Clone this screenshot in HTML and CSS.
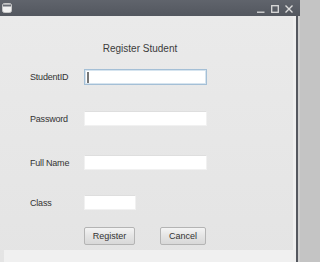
FILE: index.html
```html
<!DOCTYPE html>
<html>
<head>
<meta charset="utf-8">
<link rel="stylesheet" href="styles.css">
</head>
<body>
<div class="window">
  <div class="titlebar">
    <svg class="appicon" width="10" height="10" viewBox="0 0 10 10">
      <rect x="0.5" y="0.5" width="9" height="9" rx="2" fill="#f2f2f2" stroke="#c8c8c8"/>
      <rect x="1" y="1.5" width="8" height="2" fill="#6a6e76"/>
    </svg>
    <div class="spacer"></div>
    <div class="controls">
      <svg width="8" height="8" viewBox="0 0 8 8"><path d="M0 7.2H7.5" stroke="#dcdcdc" stroke-width="1.3"/></svg>
      <svg width="8" height="8" viewBox="0 0 8 8"><rect x="0.7" y="0.7" width="6.6" height="6.6" fill="none" stroke="#dcdcdc" stroke-width="1.3"/></svg>
      <svg width="8" height="8" viewBox="0 0 8 8"><path d="M0.5 0.5L7.5 7.5M7.5 0.5L0.5 7.5" stroke="#dcdcdc" stroke-width="1.4"/></svg>
    </div>
  </div>
  <div class="frame">
    <div class="client">
      <div class="form">
        <div class="heading">Register Student</div>
        <div class="row row-first">
          <span class="label">StudentID</span>
          <div class="field field-focus"><span class="caret"></span></div>
        </div>
        <div class="row row-2">
          <span class="label">Password</span>
          <div class="field"></div>
        </div>
        <div class="row row-3">
          <span class="label">Full Name</span>
          <div class="field"></div>
        </div>
        <div class="row row-4">
          <span class="label">Class</span>
          <div class="field field-short"></div>
        </div>
        <div class="buttons">
          <div class="btn btn-register">Register</div>
          <div class="btn btn-cancel">Cancel</div>
        </div>
      </div>
      <div class="band"></div>
    </div>
    <div class="edge-light"></div>
    <div class="edge-dark"></div>
    <div class="outside"></div>
  </div>
</div>
</body>
</html>
```
FILE: styles.css
```css
html, body {
  margin: 0;
  padding: 0;
}
body {
  width: 300px;
  height: 262px;
  overflow: hidden;
  font-family: "Liberation Sans", Arial, sans-serif;
  background: #c4c4c4;
}
.window {
  display: flex;
  flex-direction: column;
  width: 300px;
  height: 262px;
}
.titlebar {
  height: 16px;
  flex: none;
  display: flex;
  align-items: center;
  background: linear-gradient(#60646c, #53575f);
  box-sizing: border-box;
  padding: 0 7px 0 2px;
}
.appicon {
  display: block;
}
.spacer {
  flex: 1;
}
.controls {
  display: flex;
  gap: 6px;
  align-items: center;
  margin-top: 1px;
}
.controls svg {
  display: block;
}
.frame {
  flex: 1;
  display: flex;
}
.client {
  width: 293px;
  display: flex;
  flex-direction: column;
  background: linear-gradient(#eaeaea, #e4e4e4);
}
.form {
  flex: 1;
  display: flex;
  flex-direction: column;
}
.heading {
  width: 280px;
  text-align: center;
  font-size: 10px;
  line-height: 12px;
  color: #3c3c3c;
  margin-top: 27px;
}
.row {
  display: flex;
  align-items: center;
  height: 16px;
  padding-left: 30px;
}
.row-first { margin-top: 14px; }
.row-2 { margin-top: 26px; height: 15px; }
.row-3 { margin-top: 29px; height: 15px; }
.row-4 { margin-top: 25px; height: 15px; }
.label {
  width: 54px;
  font-size: 9px;
  letter-spacing: -0.2px;
  color: #333;
  line-height: 12px;
}
.field {
  width: 123px;
  height: 100%;
  box-sizing: border-box;
  background: #fff;
  border: 1px solid #f1f1f1;
  border-top-color: #dedede;
  display: flex;
  align-items: center;
}
.field-focus {
  border: 1px solid #a4bfd6;
  box-shadow: inset 0 0 0 1px #d6e4ef;
}
.field-short {
  width: 52px;
}
.caret {
  width: 2px;
  height: 11px;
  background: #777;
  margin-left: 2px;
}
.buttons {
  display: flex;
  padding-left: 84px;
  gap: 25px;
  margin-top: 17px;
}
.btn {
  height: 18px;
  box-sizing: border-box;
  border: 1px solid #b4b4b4;
  border-radius: 2px;
  background: linear-gradient(#f4f4f4, #e4e4e4 50%, #d8d8d8);
  font-size: 9px;
  color: #333;
  display: flex;
  align-items: center;
  justify-content: center;
}
.btn-register { width: 51px; }
.btn-cancel { width: 46px; }
.band {
  height: 12px;
  margin-left: 4px;
  background: #f0f0f0;
}
.edge-light {
  width: 3px;
  background: #efefef;
}
.edge-dark {
  width: 2px;
  background: #55585f;
}
.outside {
  width: 2px;
  background: #cfcfcf;
}
```
